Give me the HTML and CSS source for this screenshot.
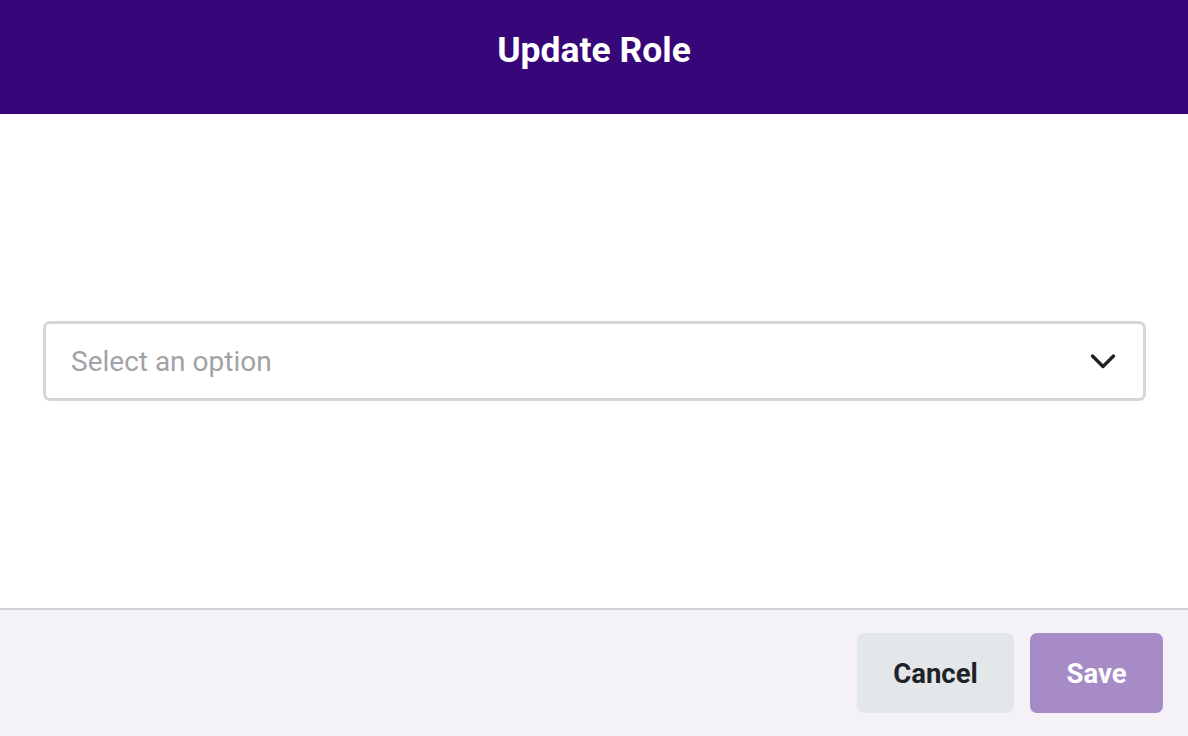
FILE: index.html
```html
<!DOCTYPE html>
<html lang="en">
<head>
<meta charset="utf-8">
<title>Update Role</title>
<link rel="stylesheet" href="styles.css">
</head>
<body>
<div class="modal">
  <header class="modal-header">
    <h1 class="modal-title">Update Role</h1>
  </header>
  <main class="modal-body">
    <div class="select">
      <span class="select-placeholder">Select an option</span>
      <svg class="select-chevron" width="26" height="17" viewBox="0 0 26 17" aria-hidden="true">
        <path d="M2.5 3 L13 13.5 L23.5 3" fill="none" stroke="#1f2328" stroke-width="3.4" stroke-linecap="round" stroke-linejoin="round"/>
      </svg>
    </div>
  </main>
  <footer class="modal-footer">
    <button class="btn btn-cancel">Cancel</button>
    <button class="btn btn-save">Save</button>
  </footer>
</div>
</body>
</html>
```
FILE: styles.css
```css
html, body {
  margin: 0;
  padding: 0;
  height: 100%;
}
body {
  font-family: Roboto, "Liberation Sans", sans-serif;
  background: #ffffff;
}
.modal {
  display: flex;
  flex-direction: column;
  height: 736px;
  width: 1188px;
}
.modal-header {
  height: 114px;
  background: #37077a;
  display: flex;
  align-items: center;
  justify-content: center;
}
.modal-title {
  margin: 0;
  color: #ffffff;
  font-size: 35.5px;
  font-weight: 700;
  line-height: 1;
  padding-bottom: 12px;
}
.modal-body {
  flex: 1;
  display: flex;
  align-items: center;
  padding: 0 42px 0 43px;
}
.select {
  flex: 1;
  height: 74px;
  border: 3px solid #d4d6d9;
  border-radius: 7px;
  display: flex;
  align-items: center;
  justify-content: space-between;
  padding: 0 27px 0 25px;
}
.select-placeholder {
  font-size: 28px;
  color: #9fa3a8;
}
.select-chevron {
  display: block;
}
.modal-footer {
  height: 128px;
  background: #f4f2f7;
  border-top: 2px solid #d3d3d8;
  display: flex;
  align-items: center;
  justify-content: flex-end;
  gap: 16px;
  padding: 0 25px 0 0;
  box-sizing: border-box;
}
.btn {
  height: 80px;
  border: none;
  border-radius: 7px;
  font-family: Roboto, "Liberation Sans", sans-serif;
  font-size: 27.5px;
  font-weight: 700;
  cursor: pointer;
  padding: 0;
}
.btn-cancel {
  width: 157px;
  background: #e4e7e9;
  color: #1f2328;
}
.btn-save {
  width: 133px;
  background: #a68bc6;
  color: #ffffff;
}
```
